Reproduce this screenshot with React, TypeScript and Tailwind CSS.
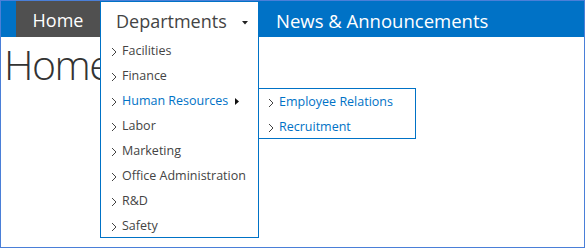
import React from "react";

const items = [
  "Facilities",
  "Finance",
  "Human Resources",
  "Labor",
  "Marketing",
  "Office Administration",
  "R&D",
  "Safety",
];

const subItems = ["Employee Relations", "Recruitment"];

function Chevron() {
  return (
    <svg width="6" height="10" viewBox="0 0 6 10" className="shrink-0">
      <polyline points="1,1 5,5 1,9" fill="none" stroke="#444" strokeWidth="1" />
    </svg>
  );
}

export default function App() {
  return (
    <div className="w-[585px] h-[248px] border border-[#4a7fd8] bg-white relative overflow-hidden font-['Segoe_UI','Open_Sans',sans-serif]">
      <nav className="flex h-[36px] bg-[#0072c6] pl-[15px]">
        <div className="w-[84px] bg-[#505050] text-white text-[18px] flex items-center justify-center pt-[3px]">
          Home
        </div>
        <div className="relative w-[159px] bg-white border-x border-t border-[#0072c6] flex items-center pl-[15px] pr-[10px] pt-[3px]">
          <span className="text-[18px] text-[#444]">Departments</span>
          <svg width="6" height="4" viewBox="0 0 6 4" className="ml-auto mt-[3px]">
            <polygon points="0,0 6,0 3,3.5" fill="#222" />
          </svg>
          <div className="absolute top-full left-[-1px] w-[159px] h-[201px] bg-white border-x border-b border-[#0072c6] z-10 pt-[2px]">
            {items.map((item) => (
              <div
                key={item}
                className="relative h-[25px] flex items-center pl-[10px] gap-[5px] text-[12.5px]"
              >
                <Chevron />
                <span className={item === "Human Resources" ? "text-[#0072c6]" : "text-[#444]"}>
                  {item}
                </span>
                {item === "Human Resources" && (
                  <>
                    <svg width="4" height="7" viewBox="0 0 4 7" className="ml-[2px]">
                      <polygon points="0,0 4,3.5 0,7" fill="#111" />
                    </svg>
                    <div className="absolute left-[157px] top-[-1px] w-[158px] h-[51px] bg-white border border-[#0072c6] pt-[1px]">
                      {subItems.map((s) => (
                        <div key={s} className="h-[25px] flex items-center pl-[9px] gap-[5px] text-[12.5px] text-[#0072c6]">
                          <Chevron />
                          <span>{s}</span>
                        </div>
                      ))}
                    </div>
                  </>
                )}
              </div>
            ))}
          </div>
        </div>
        <div className="flex items-center pl-[17px] pt-[3px] text-white text-[18.5px]">
          News &amp; Announcements
        </div>
      </nav>
      <h1 className="text-[41px] font-light text-[#333] leading-none tracking-[-1.5px] pl-[3px] mt-[7px]">Home</h1>
    </div>
  );
}
